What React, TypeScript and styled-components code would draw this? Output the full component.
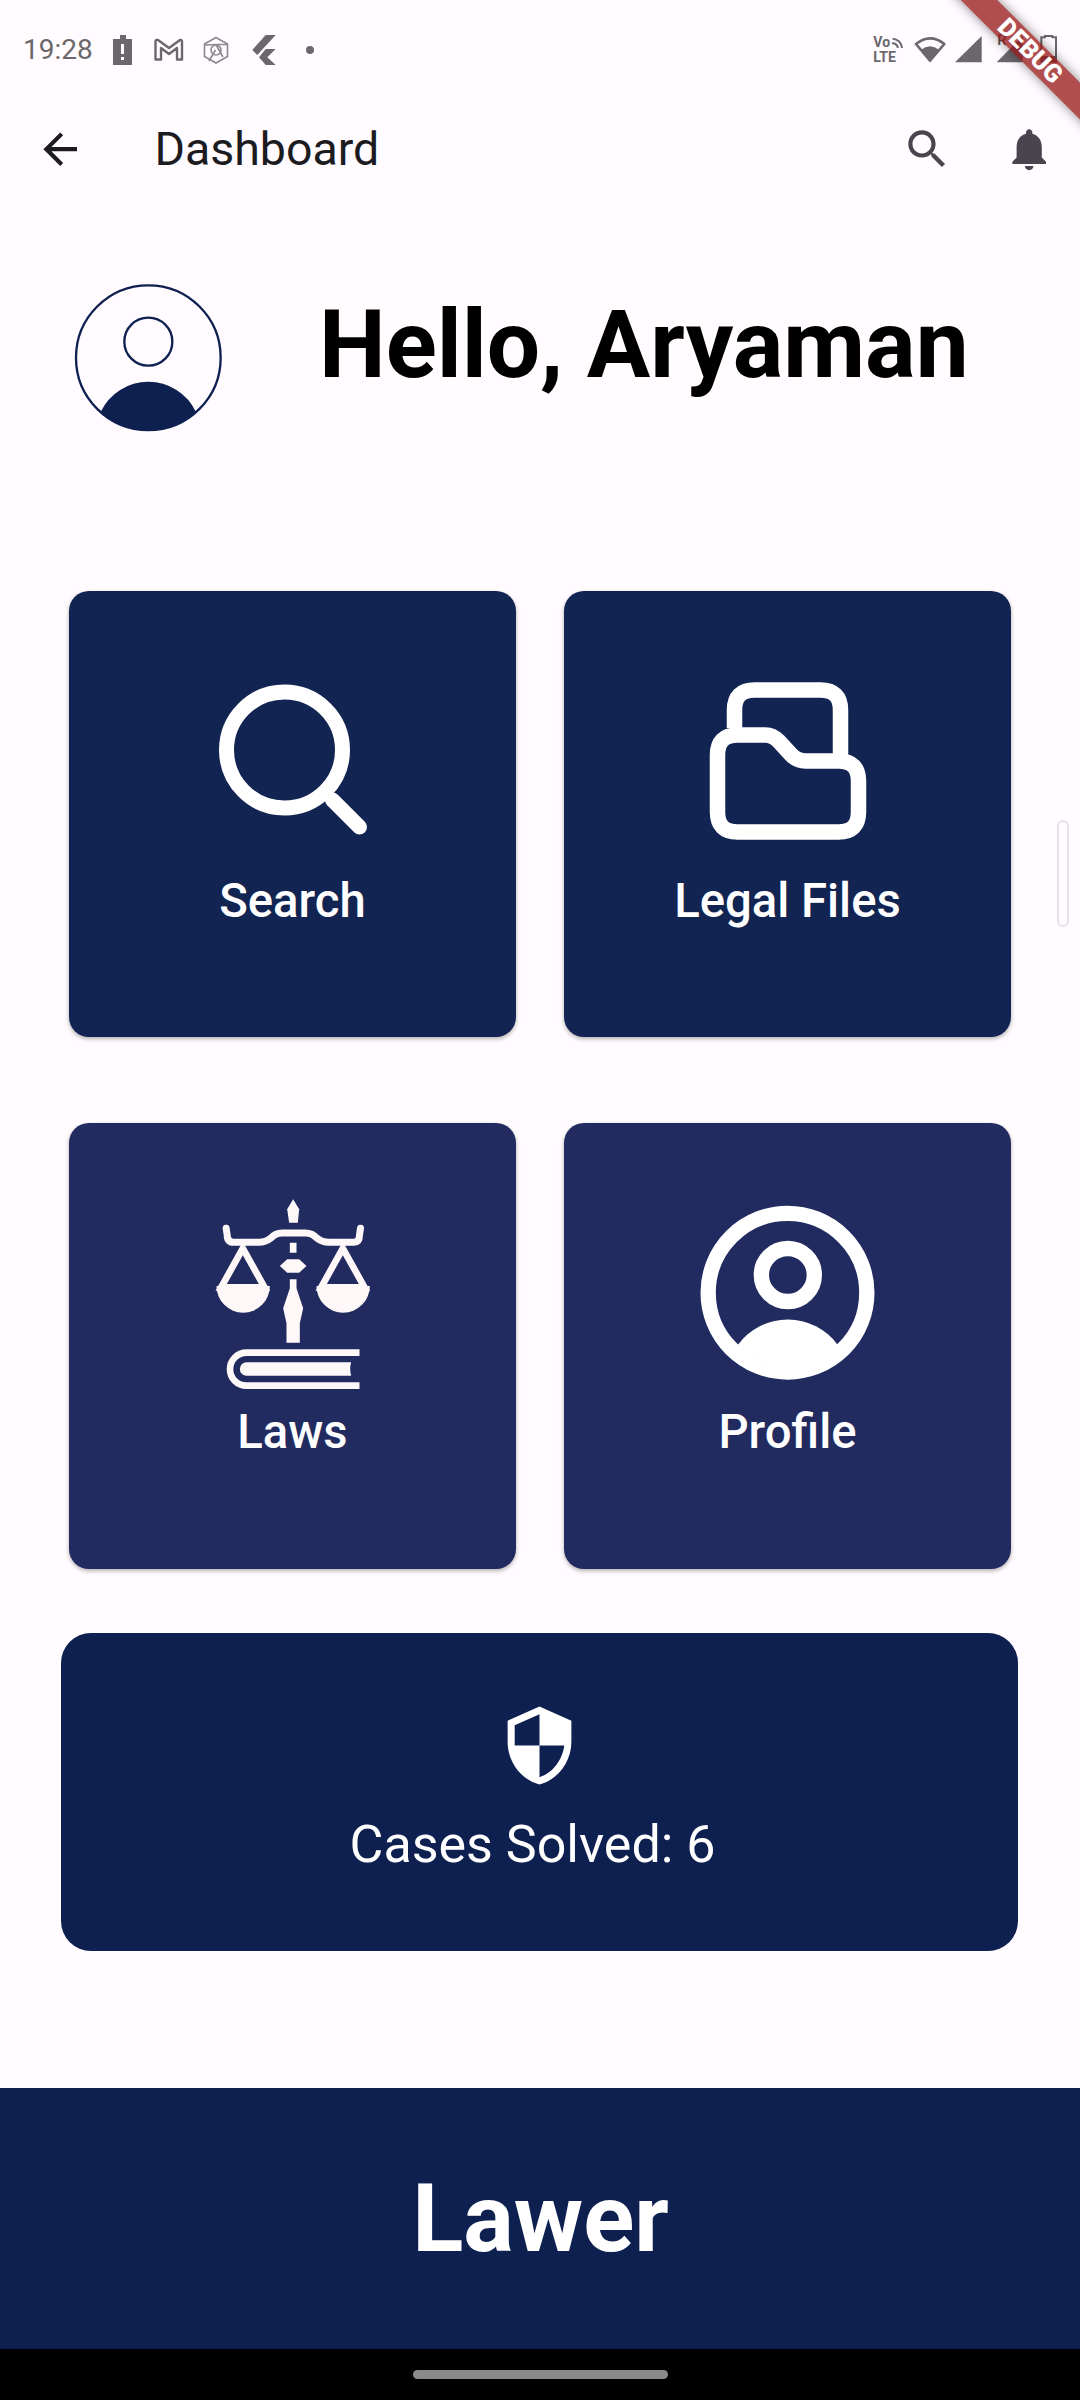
import styled, { createGlobalStyle } from 'styled-components';

const GlobalStyle = createGlobalStyle`
  html, body {
    margin: 0;
    padding: 0;
    background: #fffbfe;
  }
  * {
    box-sizing: border-box;
  }
`;

const Page = styled.div`
  position: relative;
  width: 1080px;
  height: 2400px;
  display: flex;
  flex-direction: column;
  overflow: hidden;
  background: #fffbfe;
  font-family: Roboto, 'Noto Sans', sans-serif;
`;

const StatusBar = styled.div`
  height: 90px;
  display: flex;
  align-items: flex-start;
  justify-content: space-between;
  padding: 30px 10px 0 23px;
`;

const StatusLeft = styled.div`
  display: flex;
  align-items: center;
  gap: 20px;
  height: 40px;
`;

const Time = styled.span`
  width: 65px;
  font-size: 28px;
  line-height: 40px;
  color: #6b686c;
  white-space: nowrap;
`;

const DebugRibbon = styled.div`
  position: absolute;
  top: 38px;
  left: 910px;
  width: 240px;
  height: 26px;
  transform: rotate(45deg);
  background: rgba(150, 20, 20, 0.75);
  box-shadow: 0 0 12px rgba(0, 0, 0, 0.45);
  color: #fff;
  font-size: 25px;
  font-weight: 900;
  line-height: 26px;
  text-align: center;
`;

const AppBar = styled.header`
  height: 118px;
  display: flex;
  align-items: center;
  padding: 0 26px 0 35px;
`;

const Title = styled.h1`
  flex: 1;
  margin: 0 0 0 69px;
  font-size: 46.5px;
  font-weight: 400;
  color: #1c1b1f;
`;

const BarIcon = styled.svg<{ $color: string }>`
  width: 50.4px;
  height: 50.4px;
  flex: none;
  fill: ${({ $color }) => $color};
`;

const BarActions = styled.div`
  display: flex;
  gap: 51px;
`;

const Greeting = styled.section`
  margin-top: 52px;
  height: 200px;
  display: flex;
  padding-left: 50px;
`;

const Hello = styled.h2`
  margin: 0 0 0 69px;
  font-size: 94.5px;
  font-weight: 700;
  line-height: 170px;
  color: #000;
  white-space: nowrap;
`;

const TileGrid = styled.section`
  margin-top: 131px;
  padding: 0 69px;
  display: grid;
  grid-template-columns: 447px 447px;
  column-gap: 48px;
  row-gap: 86px;
`;

const Tile = styled.div<{ $bg: string; $pad: number; $slot: number }>`
  height: 446px;
  display: flex;
  flex-direction: column;
  align-items: center;
  padding-top: ${({ $pad }) => $pad}px;
  border-radius: 20px;
  background: ${({ $bg }) => $bg};
  box-shadow: 0 2px 4px rgba(0, 0, 0, 0.3);
  color: #fff;

  > svg {
    height: ${({ $slot }) => $slot}px;
    flex: none;
  }
`;

const TileLabel = styled.span<{ $gap: number }>`
  margin-top: ${({ $gap }) => $gap}px;
  font-size: 47.25px;
  font-weight: 500;
  line-height: 56px;
`;

const StatsCard = styled.section`
  margin: 64px 62px 0 61px;
  height: 318px;
  display: flex;
  flex-direction: column;
  align-items: center;
  padding-top: 70px;
  border-radius: 30px;
  background: #0e2050;
  color: #fff;
`;

const StatsIcon = styled.svg`
  width: 85px;
  height: 85px;
  fill: #fff;
`;

const StatsText = styled.span`
  margin-top: 27px;
  padding-right: 14px;
  font-size: 52px;
  line-height: 60px;
`;

const Footer = styled.footer`
  margin-top: auto;
  height: 261px;
  display: flex;
  align-items: center;
  justify-content: center;
  background: #0e2050;
  color: #fff;
  font-size: 94.5px;
  font-weight: 700;
  padding-left: 1px;
`;

const NavBar = styled.div`
  height: 51px;
  display: flex;
  justify-content: center;
  padding-top: 21px;
  background: #000;
`;

const NavHandle = styled.div`
  width: 255px;
  height: 9px;
  border-radius: 5px;
  background: #8a8a8a;
`;

const ScrollThumb = styled.div`
  position: absolute;
  top: 820px;
  left: 1057px;
  width: 12px;
  height: 107px;
  border: 2px solid #e4e2e4;
  border-radius: 6px;
`;

const NotifIcons = () => (
  <svg width="210" height="40" viewBox="0 0 210 40" fill="#6b686c">
    <path d="M12 9V5h6v4h6v26H5V9z" />
    <path d="M13 14h3v10h-3zM13 27h3v3h-3z" fill="#fffbfe" />
    <path d="M47.5 29.5V11.5Q47.5 9.5 50 10L61 18L72 10Q74 9.5 74 11.5V29.5H69V18L61 24L53 18V29.5Z" fill="none" stroke="#6b686c" strokeWidth="2.4" strokeLinejoin="round" />
    <path d="M108 7.5L119.5 14V26.5L108 33L96.5 26.5V14ZM97 15L110 14.5H119M115 27L108 14.5M101 31L107.5 20" fill="none" stroke="#8c898c" strokeWidth="1.6" />
    <circle cx="108" cy="20" r="5" fill="none" stroke="#8c898c" strokeWidth="1.6" />
    <path d="M167.7 5H157.7L144.3 20L149.3 25ZM167.7 19H157.7L151 27.3L157.7 35H167.7L159.3 27.3Z" />
    <circle cx="202" cy="20" r="4" />
  </svg>
);

const SystemIcons = () => (
  <svg width="210" height="50" viewBox="180 0 630 150" fill="#6b686c">
    <text x="220" y="52" fontFamily="Roboto, sans-serif" fontWeight="700" fontSize="42">Vo</text>
    <text x="220" y="97" fontFamily="Roboto, sans-serif" fontWeight="700" fontSize="42">LTE</text>
    <path d="M276 40a18 18 0 0 1 18 14M278 26a30 30 0 0 1 28 28" fill="none" stroke="#6b686c" strokeWidth="6" />
    <path d="M390 92L348 42Q390 8 433 42Z" fill="none" stroke="#6b686c" strokeWidth="8" strokeLinejoin="round" />
    <path d="M390 94L362 60Q390 38 418 60Z" />
    <path d="M545 18V97H465Z" />
    <text x="592" y="46" fontFamily="Roboto, sans-serif" fontWeight="500" fontSize="44" fill="#555">R</text>
    <path d="M668 18V97H590Z" />
    <path d="M735 22V18H757V22H768V95H724V22Z" fill="none" stroke="#6b686c" strokeWidth="6" />
    <path d="M724 78H768V97H724Z" />
  </svg>
);

const AvatarIcon = () => (
  <svg width="200" height="200" viewBox="0 0 600 600">
    <circle cx="295" cy="293" r="217" fill="none" stroke="#0e2050" strokeWidth="7" />
    <circle cx="295" cy="245" r="72" fill="none" stroke="#0e2050" strokeWidth="7" />
    <path d="M152 456A158 158 0 0 1 438 456A217 217 0 0 1 152 456Z" fill="#0e2050" />
  </svg>
);

const SearchIcon = () => (
  <svg viewBox="2.5 0 220 200" width="220" fill="none" stroke="#fff" strokeLinecap="round">
    <circle cx="104" cy="100" r="58" strokeWidth="15" />
    <path d="M152 150L179 177" strokeWidth="15" />
  </svg>
);

const FolderIcon = () => (
  <svg viewBox="7.5 0 240 200" width="240" fill="none" stroke="#fff" strokeWidth="15.5">
    <path d="M74 78V60Q74 40 94 40H160Q180 40 180 60V105" />
    <path d="M57 105Q57 85 77 85H105Q112 85 118 91L131 105Q137 111 145 111H178Q198 111 198 131V162Q198 182 178 182H77Q57 182 57 162Z" />
  </svg>
);

const LawsIcon = () => (
  <svg viewBox="7.5 0 600 660" width="200" fill="#fff8f8">
    <path d="M308 58L326 88L322 128H296L290 88Z" />
    <path d="M107 145L110 165Q110 187 130 187H205Q225 187 240 175Q255 159 275 159H345Q365 159 380 175Q395 187 415 187H490Q507 187 507 165L510 145" fill="none" stroke="#fff8f8" strokeWidth="21" strokeLinecap="round" />
    <path d="M298 188H318V218H298ZM268 258L290 238H326L348 258L326 278H290ZM298 298H318V325L338 385L328 430V488H288V430L278 385L298 325Z" />
    <path d="M157 205L92 322H222ZM457 205L392 322H522Z" fill="none" stroke="#fff8f8" strokeWidth="20" />
    <path d="M78 318H238A80 80 0 0 1 78 318ZM378 318H538A80 80 0 0 1 378 318Z" />
    <path d="M507 518H168A49.5 49.5 0 0 0 168 617H507" fill="none" stroke="#fff8f8" strokeWidth="20" />
    <path d="M168 547H482Q476 567 482 587H168A20 20 0 0 1 168 547Z" />
  </svg>
);

const ProfileIcon = () => (
  <svg viewBox="-7.5 0 660 600" width="220" fill="none" stroke="#fff" strokeWidth="46">
    <circle cx="321" cy="308" r="238" />
    <circle cx="322" cy="255" r="79.5" />
    <path d="M172 465A185 185 0 0 1 472 465A216 216 0 0 1 172 465Z" fill="#fff" stroke="none" />
  </svg>
);

const App = () => {
  return (
    <Page>
      <GlobalStyle />
      <StatusBar>
        <StatusLeft>
          <Time>19:28</Time>
          <NotifIcons />
        </StatusLeft>
        <SystemIcons />
      </StatusBar>
      <DebugRibbon>DEBUG</DebugRibbon>
      <AppBar>
        <BarIcon $color="#1c1b1f" viewBox="0 0 24 24">
          <path d="M20 11H7.83l5.59-5.59L12 4l-8 8 8 8 1.41-1.41L7.83 13H20v-2z" />
        </BarIcon>
        <Title>Dashboard</Title>
        <BarActions>
          <BarIcon $color="#49454f" viewBox="0 0 24 24">
            <path d="M15.5 14h-.79l-.28-.27C15.41 12.59 16 11.11 16 9.5 16 5.91 13.09 3 9.5 3S3 5.91 3 9.5 5.91 16 9.5 16c1.61 0 3.09-.59 4.23-1.57l.27.28v.79l5 4.99L20.49 19l-4.99-5zm-6 0C7.01 14 5 11.99 5 9.5S7.01 5 9.5 5 14 7.01 14 9.5 11.99 14 9.5 14z" />
          </BarIcon>
          <BarIcon $color="#49454f" viewBox="0 0 24 24">
            <path d="M12 22c1.1 0 2-.9 2-2h-4c0 1.1.89 2 2 2zm6-6v-5c0-3.07-1.64-5.64-4.5-6.32V4c0-.83-.67-1.5-1.5-1.5s-1.5.67-1.5 1.5v.68C7.63 5.36 6 7.92 6 11v5l-2 2v1h16v-1l-2-2z" />
          </BarIcon>
        </BarActions>
      </AppBar>
      <Greeting>
        <AvatarIcon />
        <Hello>Hello, Aryaman</Hello>
      </Greeting>
      <TileGrid>
        <Tile $bg="#122452" $pad={59} $slot={200}>
          <SearchIcon />
          <TileLabel $gap={23}>Search</TileLabel>
        </Tile>
        <Tile $bg="#122452" $pad={59} $slot={200}>
          <FolderIcon />
          <TileLabel $gap={23}>Legal Files</TileLabel>
        </Tile>
        <Tile $bg="#212b60" $pad={57} $slot={220}>
          <LawsIcon />
          <TileLabel $gap={4}>Laws</TileLabel>
        </Tile>
        <Tile $bg="#212b60" $pad={67} $slot={200}>
          <ProfileIcon />
          <TileLabel $gap={14}>Profile</TileLabel>
        </Tile>
      </TileGrid>
      <StatsCard>
        <StatsIcon viewBox="0 0 24 24">
          <path d="M12 1L3 5v6c0 5.55 3.84 10.74 9 12 5.16-1.26 9-6.45 9-12V5l-9-4zm0 10.99h7c-.53 4.12-3.28 7.79-7 8.94V12H5V6.3l7-3.11v8.8z" />
        </StatsIcon>
        <StatsText>Cases Solved: 6</StatsText>
      </StatsCard>
      <Footer>Lawer</Footer>
      <NavBar>
        <NavHandle />
      </NavBar>
      <ScrollThumb />
    </Page>
  );
};

export default App;
